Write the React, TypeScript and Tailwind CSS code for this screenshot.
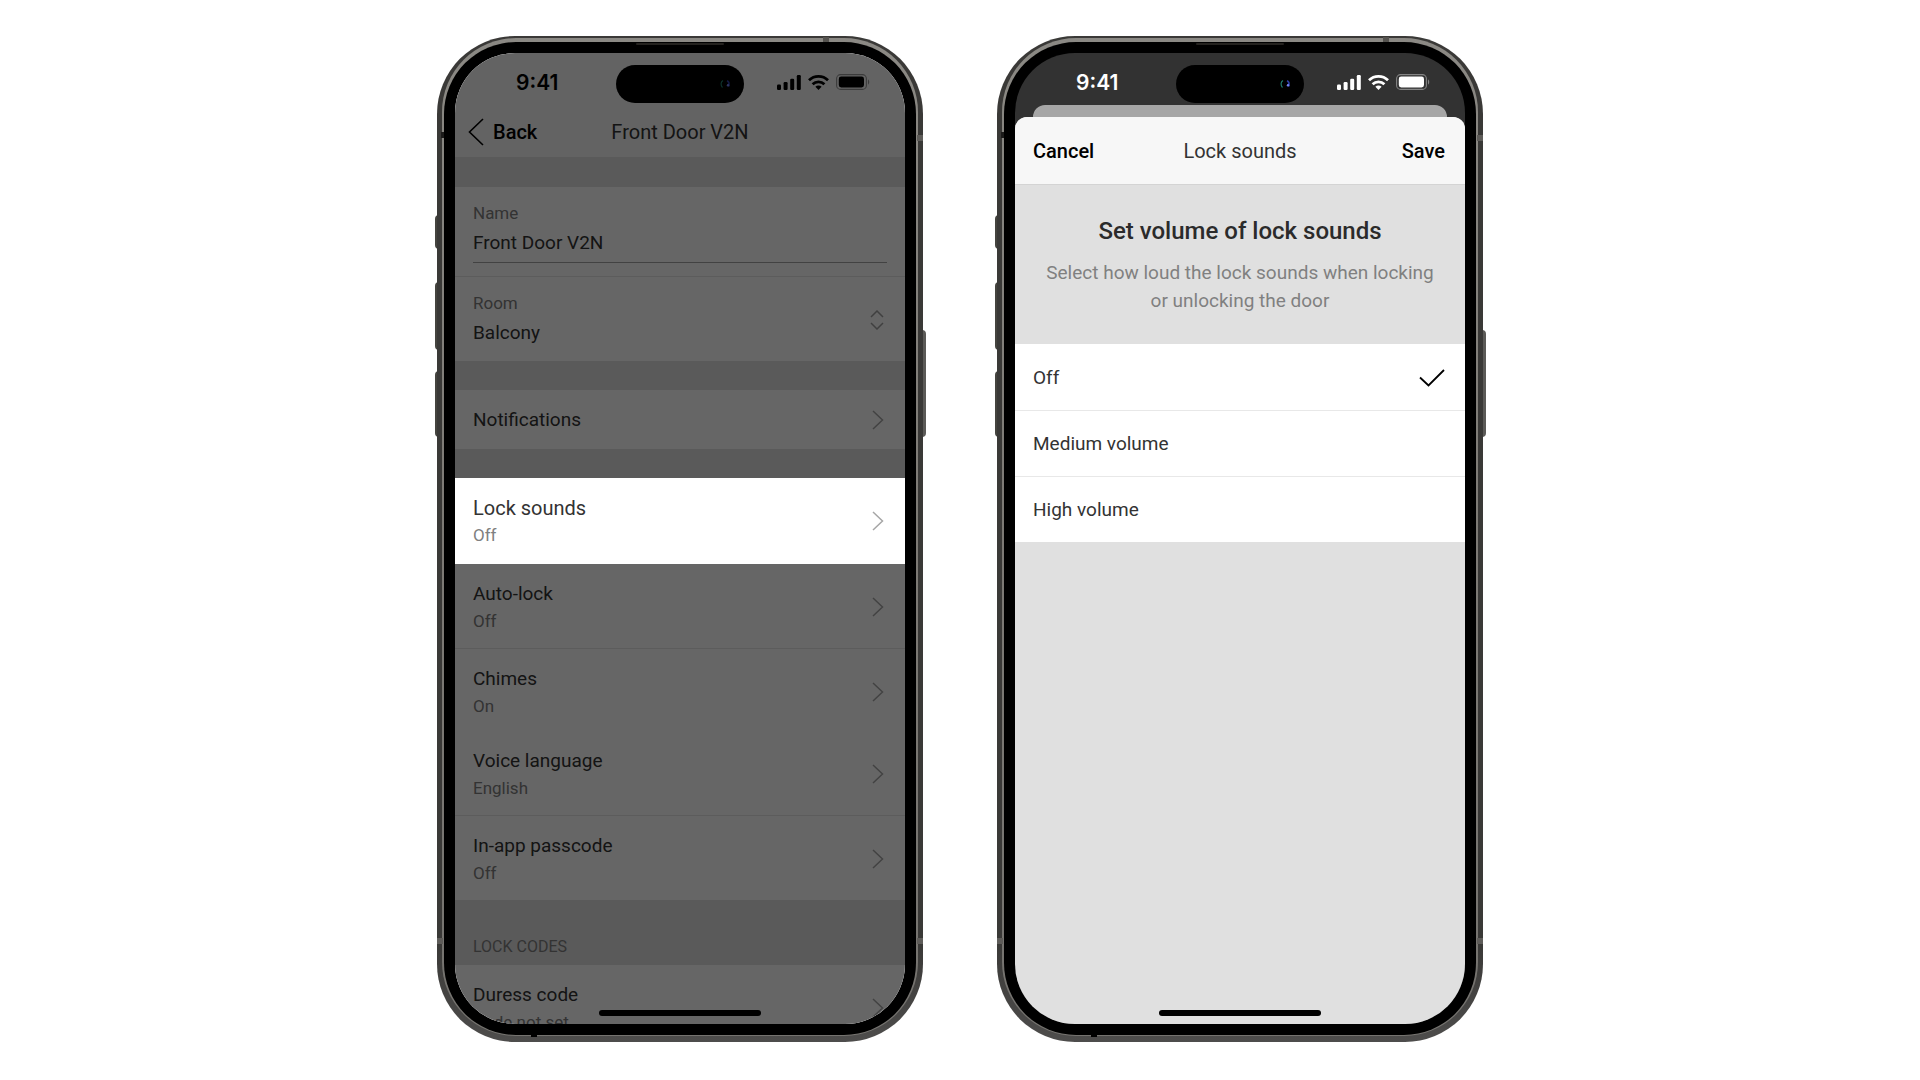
import type { ReactNode } from 'react';

interface SettingRow {
  title: string;
  value: string;
  className?: string;
}

const settings: SettingRow[] = [
  { title: 'Auto-lock', value: 'Off', className: 'border-b border-[#e6e6e6] pb-[15px]' },
  { title: 'Chimes', value: 'On', className: 'pb-[13px]' },
  { title: 'Voice language', value: 'English', className: 'border-b border-[#e6e6e6] pb-[15px]' },
  { title: 'In-app passcode', value: 'Off', className: 'pb-[15px]' },
];

const volumes = ['Off', 'Medium volume', 'High volume'];

function Chevron() {
  return (
    <svg className="h-5 w-3 shrink-0 text-[#a6a6a6]" viewBox="0 0 12 20" fill="none" stroke="currentColor" strokeWidth="1.5">
      <path d="M1 1l9.5 9L1 19" />
    </svg>
  );
}

function StatusBar({ className }: { className: string }) {
  return (
    <div className={`grid h-[54px] shrink-0 grid-cols-[1fr_128px_1fr] pt-[12px] ${className}`}>
      <div className="flex h-[36px] items-center pl-[61px] font-['Inter'] text-[21px] leading-[36px] font-semibold">9:41</div>
      <div className="flex h-[38px] items-center justify-end rounded-full bg-black pr-[13px]">
        <svg className="h-[10px] w-[12px]" viewBox="0 0 12 10" fill="none">
          <path d="M4 1.5C1.5 3 1.5 6.500 3.500 8.500" stroke="#1f7a6c" strokeWidth="1.200" />
          <path d="M8 1.800c2.200.7 2.500 3.200 1.500 5.700" stroke="#2b3a9c" strokeWidth="1.800" />
          <circle cx="9" cy="6.200" r="1.200" fill="#7484f0" />
        </svg>
      </div>
      <div className="flex h-[34px] items-center gap-[7px] pl-[33px]">
        <svg className="h-[15px] w-[24px]" viewBox="0 0 24 15" fill="currentColor">
          <rect x="0" y="9.500" width="4" height="5.500" rx="1.200" />
          <rect x="6.600" y="7" width="4" height="8" rx="1.200" />
          <rect x="13.200" y="3.800" width="4" height="11.200" rx="1.200" />
          <rect x="19.800" y="0" width="4" height="15" rx="1.200" />
        </svg>
        <svg className="h-[15px] w-[21px]" viewBox="0 0 21 15" fill="none" stroke="currentColor" strokeWidth="2.800">
          <path d="M1 5.300a13.600 13.600 0 0 1 19 0" />
          <path d="M4.600 9.200a8.400 8.400 0 0 1 11.800 0" />
          <path d="M10.500 15l-3.100-3.200a4.400 4.400 0 0 1 6.200 0z" fill="currentColor" stroke="none" />
        </svg>
        <svg className="h-[16px] w-[34px]" viewBox="0 0 34 16" fill="none">
          <rect x=".6" y=".6" width="29.800" height="14.800" rx="4" stroke="currentColor" strokeOpacity=".4" strokeWidth="1.100" />
          <rect x="2.800" y="2.600" width="25.200" height="10.800" rx="2.400" fill="currentColor" />
          <path d="M32 5.500c1.600.6 1.600 4.400 0 5z" fill="currentColor" fillOpacity=".4" />
        </svg>
      </div>
    </div>
  );
}

function Phone({ label, children }: { label: string; children: ReactNode }) {
  return (
    <section aria-label={label} className="relative aspect-[486/1006] w-full max-w-[486px]">
      {/* side buttons */}
      <span className="absolute top-[179px] -left-[2px] h-[34px] w-1 rounded-l-sm bg-[#45443f]" />
      <span className="absolute top-[246px] -left-[2px] h-[68px] w-1 rounded-l-sm bg-[#45443f]" />
      <span className="absolute top-[335px] -left-[2px] h-[66px] w-1 rounded-l-sm bg-[#45443f]" />
      <span className="absolute top-[294px] -right-[3px] h-[107px] w-1 rounded-r-sm bg-[#5b5a57]" />
      <div className="relative h-full rounded-[78px] bg-linear-to-b from-[#3a3937] from-90% to-[#4e4d4c] px-[5px] pt-[2px] pb-[6px]">
        <div className="h-full rounded-[74px] bg-linear-to-b from-[#8b8984] via-[#7d7a75] to-[#75736f] px-[2px] pt-[4px] pb-px">
          <div className="h-full rounded-[72px] bg-black p-[11px]">
            <div className="relative flex h-full flex-col overflow-hidden rounded-[60px]">
              {children}
              <span className="absolute bottom-2 left-1/2 z-20 h-[6px] w-[162px] -translate-x-1/2 rounded-full bg-black" />
            </div>
          </div>
        </div>
        {/* antenna bands and earpiece */}
        <span className="absolute top-[96px] left-1 h-[6px] w-[3px] bg-[#1c1b1a]" />
        <span className="absolute top-[99px] right-0 h-[6px] w-[6px] bg-[#5e5c59]" />
        <span className="absolute bottom-[98px] left-0 h-[6px] w-[6px] bg-[#5e5c59]" />
        <span className="absolute right-0 bottom-[98px] h-[6px] w-[6px] bg-[#5e5c59]" />
        <span className="absolute top-[1px] right-[94px] h-[5px] w-[6px] bg-[#55534f]" />
        <span className="absolute top-[7px] left-1/2 h-[2px] w-[88px] -translate-x-1/2 rounded-full bg-[#24221f]" />
        <span className="absolute bottom-[5px] left-[94px] h-[2px] w-[6px] bg-black" />
      </div>
    </section>
  );
}

function LinkRow({ title, value, className = '', titleClass = 'text-[19px]' }: SettingRow & { titleClass?: string }) {
  return (
    <button className={`flex w-full shrink-0 items-center justify-between bg-white pt-4 pr-[21px] pl-[18px] text-left ${className}`}>
      <span className="flex flex-col gap-px">
        <span className={`leading-7 text-[#333] ${titleClass}`}>{title}</span>
        <span className="text-[17px] leading-6 text-[#808080]">{value}</span>
      </span>
      <Chevron />
    </button>
  );
}

function SettingsScreen() {
  return (
    <Phone label="Device settings">
      <div className="flex h-full flex-col bg-[#e0e0e0]">
        <div className="shrink-0 bg-[#f7f7f7]">
          <StatusBar className="text-black" />
          <header className="grid h-[50px] grid-cols-[1fr_auto_1fr] items-center px-[13px] text-[20px]">
            <button className="flex items-center gap-[9px] font-medium text-black">
              <svg className="h-7 w-4" viewBox="0 0 16 28" fill="none" stroke="currentColor" strokeWidth="1.600">
                <path d="M15 1L1.500 14 15 27" />
              </svg>
              Back
            </button>
            <h1 className="text-[#333]">Front Door V2N</h1>
          </header>
        </div>

        <div className="mt-[30px] shrink-0 bg-white">
          <div className="border-b border-[#e6e6e6] px-[18px] pt-[14px] pb-[13px]">
            <label htmlFor="name" className="block text-[17px] leading-6 text-[#808080]">Name</label>
            <input
              id="name"
              defaultValue="Front Door V2N"
              className="block h-[38px] w-full border-b border-[#a6a6a6] pt-[3px] pb-[5px] text-[19px] text-[#333] outline-none"
            />
          </div>
          <div className="flex items-center justify-between pt-[14px] pr-[21px] pb-[13px] pl-[18px]">
            <div className="grow">
              <label htmlFor="room" className="block text-[17px] leading-6 text-[#808080]">Room</label>
              <select id="room" className="block h-[33px] w-full appearance-none pt-[3px] text-[19px] text-[#333] outline-none">
                <option>Balcony</option>
              </select>
            </div>
            <svg className="h-5 w-[14px]" viewBox="0 0 14 20" fill="none" stroke="#a0a0a0" strokeWidth="1.500">
              <path d="M1 7l6-6 6 6M1 13l6 6 6-6" />
            </svg>
          </div>
        </div>

        <button className="my-[29px] flex h-[59px] shrink-0 items-center justify-between bg-white pt-px pr-[21px] pl-[18px] text-[19px] text-[#333]">
          Notifications
          <Chevron />
        </button>

        <LinkRow title="Lock sounds" value="Off" titleClass="text-[20px]" className="relative z-10 pb-[17px]" />
        {settings.map((row) => (
          <LinkRow key={row.title} {...row} />
        ))}

        <h2 className="shrink-0 px-[18px] pt-[35px] pb-[6px] text-[16px] leading-6 text-[#808080]">LOCK CODES</h2>
        <LinkRow title="Duress code" value="Code not set" className="pb-[15px]" />
      </div>
      {/* dims everything but the highlighted row */}
      <div className="pointer-events-none absolute inset-0 bg-black/60" />
    </Phone>
  );
}

function SoundsScreen() {
  return (
    <Phone label="Lock sounds">
      <div className="flex h-full flex-col bg-[#323232]">
        <StatusBar className="text-white" />
        <div className="mx-[18px] -mt-[2px] h-3 shrink-0 rounded-t-xl bg-[#a6a6a6]" />
        <div className="flex grow flex-col overflow-hidden rounded-t-xl bg-[#e0e0e0]">
          <header className="grid h-[68px] grid-cols-[1fr_auto_1fr] items-center border-b border-[#d4d4d4] bg-[#f7f7f7] px-[18px] text-[20px]">
            <button className="justify-self-start font-medium text-black">Cancel</button>
            <h1 className="text-[#333]">Lock sounds</h1>
            <button className="justify-self-end pr-[2px] font-medium text-black">Save</button>
          </header>
          <div className="px-6 pt-[30px] pb-[29px] text-center">
            <h2 className="text-[24px] leading-8 font-medium text-[#2b2b2b]">Set volume of lock sounds</h2>
            <p className="mt-3 text-[19px] leading-7 text-[#808080]">
              Select how loud the lock sounds when locking or unlocking the door
            </p>
          </div>
          <fieldset>
            {volumes.map((volume) => (
              <label
                key={volume}
                className="flex h-[66px] items-center justify-between border-t border-[#e8e8e8] bg-white pt-px pr-[20px] pl-[18px] text-[19px] text-[#333] first:border-white"
              >
                {volume}
                <input type="radio" name="volume" defaultChecked={volume === 'Off'} className="peer sr-only" />
                <svg className="hidden h-[18px] w-[26px] peer-checked:block" viewBox="0 0 26 18" fill="none" stroke="#000" strokeWidth="1.800">
                  <path d="M1 8.500l8.500 8L25 1" />
                </svg>
              </label>
            ))}
          </fieldset>
        </div>
      </div>
    </Phone>
  );
}

export default function App() {
  return (
    <main className="flex min-h-screen items-start justify-center gap-[74px] bg-white px-6 py-9 font-['Roboto',sans-serif]">
      <SettingsScreen />
      <SoundsScreen />
    </main>
  );
}
